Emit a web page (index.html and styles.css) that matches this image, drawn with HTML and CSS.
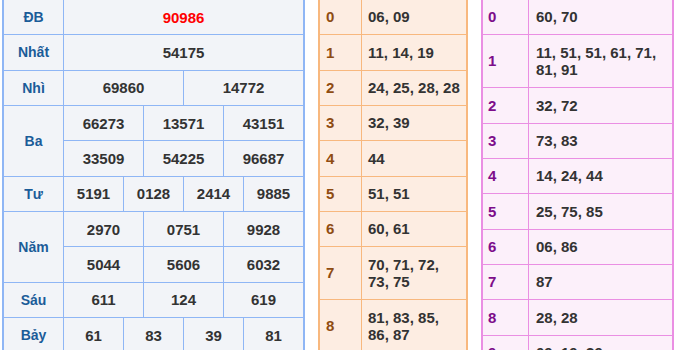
FILE: index.html
```html
<!DOCTYPE html>
<html lang="vi">
<head>
<meta charset="utf-8">
<title>Kết quả xổ số</title>
<link rel="stylesheet" href="styles.css">
</head>
<body>
<div class="page">
  <div class="results">
    <div class="lbl">ĐB</div><div class="num s12 red">90986</div>
    <div class="lbl">Nhất</div><div class="num s12">54175</div>
    <div class="lbl">Nhì</div><div class="num s6">69860</div><div class="num s6">14772</div>
    <div class="lbl r2">Ba</div><div class="num s4">66273</div><div class="num s4">13571</div><div class="num s4">43151</div>
    <div class="num s4">33509</div><div class="num s4">54225</div><div class="num s4">96687</div>
    <div class="lbl">Tư</div><div class="num s3">5191</div><div class="num s3">0128</div><div class="num s3">2414</div><div class="num s3">9885</div>
    <div class="lbl r2">Năm</div><div class="num s4">2970</div><div class="num s4">0751</div><div class="num s4">9928</div>
    <div class="num s4">5044</div><div class="num s4">5606</div><div class="num s4">6032</div>
    <div class="lbl">Sáu</div><div class="num s4">611</div><div class="num s4">124</div><div class="num s4">619</div>
    <div class="lbl">Bảy</div><div class="num s3">61</div><div class="num s3">83</div><div class="num s3">39</div><div class="num s3">81</div>
  </div>

  <div class="loto head">
    <div class="k">0</div><div class="v">06, 09</div>
    <div class="k">1</div><div class="v">11, 14, 19</div>
    <div class="k">2</div><div class="v">24, 25, 28, 28</div>
    <div class="k">3</div><div class="v">32, 39</div>
    <div class="k">4</div><div class="v">44</div>
    <div class="k">5</div><div class="v">51, 51</div>
    <div class="k">6</div><div class="v">60, 61</div>
    <div class="k">7</div><div class="v">70, 71, 72, 73, 75</div>
    <div class="k">8</div><div class="v">81, 83, 85, 86, 87</div>
    <div class="k">9</div><div class="v">91</div>
  </div>

  <div class="loto tail">
    <div class="k">0</div><div class="v">60, 70</div>
    <div class="k">1</div><div class="v">11, 51, 51, 61, 71, 81, 91</div>
    <div class="k">2</div><div class="v">32, 72</div>
    <div class="k">3</div><div class="v">73, 83</div>
    <div class="k">4</div><div class="v">14, 24, 44</div>
    <div class="k">5</div><div class="v">25, 75, 85</div>
    <div class="k">6</div><div class="v">06, 86</div>
    <div class="k">7</div><div class="v">87</div>
    <div class="k">8</div><div class="v">28, 28</div>
    <div class="k">9</div><div class="v">09, 19, 39</div>
  </div>
</div>
</body>
</html>
```

FILE: styles.css
```css
html, body {
  margin: 0;
  padding: 0;
  background: #ffffff;
  overflow: hidden;
}
body {
  font-family: "Liberation Sans", Arial, sans-serif;
  font-weight: bold;
  color: #333333;
}
.page {
  display: flex;
  align-items: flex-start;
  gap: 13px;
  padding-left: 2px;
}

/* main results table */
.results {
  width: 299px;
  display: grid;
  grid-template-columns: 59px repeat(12, 1fr);
  grid-auto-rows: 34.33px;
  gap: 1px;
  background: #8fb6f5;
  border: 2px solid #8fb6f5;
  border-top: none;
}
.results > div {
  background: #f2f4f8;
  display: flex;
  align-items: center;
  justify-content: center;
}
.lbl {
  color: #1b5c98;
  font-size: 14px;
}
.num {
  font-size: 15px;
  color: #333333;
}
.red { color: #ff0000; }
.s12 { grid-column: span 12; }
.s6 { grid-column: span 6; }
.s4 { grid-column: span 4; }
.s3 { grid-column: span 3; }
.r2 { grid-row: span 2; }

/* loto tables */
.loto {
  display: grid;
  gap: 1px;
  border: 2px solid;
  border-top: none;
  font-size: 15px;
  line-height: 17.67px;
}
.loto > div {
  padding-top: 8.33px;
  padding-bottom: 8.33px;
}
.head {
  width: 146px;
  grid-template-columns: 41px 1fr;
  background: #f8b87e;
  border-color: #f8b87e;
}
.head > div { background: #fdede2; }
.head .k { color: #8f4c12; padding-left: 6px; }
.head .v { padding-left: 6px; padding-right: 4px; }

.tail {
  width: 189px;
  grid-template-columns: 45px 1fr;
  background: #ea8fe3;
  border-color: #ea8fe3;
}
.tail > div { background: #fcf0fa; }
.tail .k { color: #7d0d8a; padding-left: 5px; }
.tail .v { padding-left: 7px; padding-right: 4px; }
.k { display: flex; align-items: center; }
```
